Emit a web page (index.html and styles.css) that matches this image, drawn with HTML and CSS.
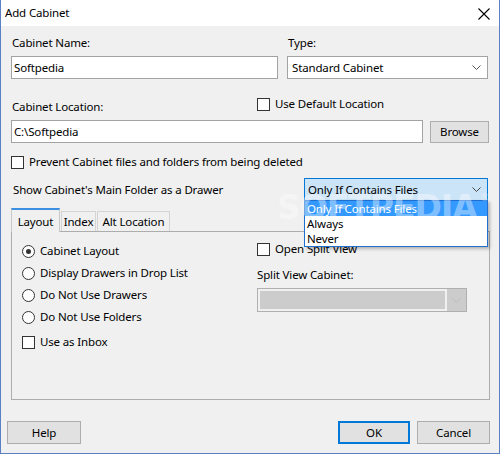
FILE: index.html
```html
<!DOCTYPE html>
<html>
<head>
<meta charset="utf-8">
<link rel="stylesheet" href="styles.css">
</head>
<body>
<div class="window">
  <div class="titlebar">
    <span class="title">Add Cabinet</span>
    <svg class="close" width="12" height="12" viewBox="0 0 12 12"><path d="M0.5 0.5 L11.5 11.5 M11.5 0.5 L0.5 11.5" stroke="#000" stroke-width="1.1" fill="none"/></svg>
  </div>
  <div class="content">
    <div class="row1">
      <div class="field">
        <div class="label">Cabinet Name:</div>
        <div class="textbox">Softpedia</div>
      </div>
      <div class="field">
        <div class="label">Type:</div>
        <div class="combo">
          <span class="ctext">Standard Cabinet</span>
          <svg class="chev" width="9" height="5" viewBox="0 0 9 5"><path d="M0.5 0.5 L4.5 4.5 L8.5 0.5" stroke="#555" fill="none"/></svg>
        </div>
      </div>
    </div>
    <div class="row2head">
      <div class="label">Cabinet Location:</div>
      <div class="check"><span class="box"></span><span>Use Default Location</span></div>
    </div>
    <div class="row2">
      <div class="textbox grow">C:\Softpedia</div>
      <div class="btn browse">Browse</div>
    </div>
    <div class="check prevent"><span class="box"></span><span>Prevent Cabinet files and folders from being deleted</span></div>
    <div class="drawer-row">
      <span class="drawer-label">Show Cabinet's Main Folder as a Drawer</span>
      <div class="combo-wrap">
        <div class="combo focus">
          <span class="ctext">Only If Contains Files</span>
          <svg class="chev" width="9" height="5" viewBox="0 0 9 5"><path d="M0.5 0.5 L4.5 4.5 L8.5 0.5" stroke="#444" fill="none"/></svg>
        </div>
        <div class="droplist">
          <div class="item sel">Only If Contains Files</div>
          <div class="item">Always</div>
          <div class="item">Never</div>
        </div>
      </div>
    </div>
    <div class="tabs">
      <div class="tab active">Layout</div>
      <div class="tab t-index">Index</div>
      <div class="tab t-alt">Alt Location</div>
    </div>
    <div class="panel">
      <div class="col-left">
        <div class="radio-row"><span class="radio on"></span><span>Cabinet Layout</span></div>
        <div class="radio-row"><span class="radio"></span><span>Display Drawers in Drop List</span></div>
        <div class="radio-row"><span class="radio"></span><span>Do Not Use Drawers</span></div>
        <div class="radio-row"><span class="radio"></span><span>Do Not Use Folders</span></div>
        <div class="check inbox"><span class="box"></span><span>Use as Inbox</span></div>
      </div>
      <div class="col-right">
        <div class="check split"><span class="box"></span><span>Open Split View</span></div>
        <div class="label split-label">Split View Cabinet:</div>
        <div class="dcombo">
          <span class="dis-fill"></span>
          <span class="dis-arrow"><svg width="9" height="5" viewBox="0 0 9 5"><path d="M0.5 0.5 L4.5 4.5 L8.5 0.5" stroke="#bdbdbd" fill="none"/></svg></span>
        </div>
      </div>
    </div>
  </div>
  <div class="buttons">
    <div class="btn help">Help</div>
    <div class="spacer"></div>
    <div class="btn ok">OK</div>
    <div class="btn cancel">Cancel</div>
  </div>
  <div class="watermark">SOFTPEDIA<sup>®</sup></div>
</div>
</body>
</html>
```

FILE: styles.css
```css
* { box-sizing: border-box; }
html, body { margin: 0; padding: 0; }
body {
  width: 500px;
  height: 454px;
  overflow: hidden;
  font-family: "Noto Sans", "Open Sans", sans-serif;
  font-size: 11.5px;
  letter-spacing: -0.15px;
  line-height: 16px;
  color: #000;
  background: #f0f0f0;
}
.window {
  position: relative;
  width: 500px;
  height: 454px;
  background: #f0f0f0;
  border-left: 1px solid #5b80c4;
  border-right: 1px solid #5b80c4;
  border-bottom: 1px solid #5b80c4;
  display: flex;
  flex-direction: column;
}
.titlebar {
  height: 26px;
  flex: 0 0 26px;
  background: #fff;
  display: flex;
  align-items: center;
  padding-left: 4px;
  padding-right: 9px;
}
.title { flex: 1; padding-bottom: 1px; }
.close { display: block; margin-top: 1px; }

.content {
  padding: 9px 10px 0 10px;
}
.label { height: 16px; white-space: nowrap; }
.row1 {
  display: grid;
  grid-template-columns: 267px 201px;
  column-gap: 9px;
}
.row1 .label { margin-bottom: 5px; padding-left: 1px; }
.textbox {
  height: 23px;
  background: #fff;
  border: 1px solid #a3a3a3;
  display: flex;
  align-items: center;
  padding-left: 2px;
  white-space: nowrap;
}
.combo {
  height: 23px;
  background: #fff;
  border: 1px solid #a3a3a3;
  display: flex;
  align-items: center;
  padding-left: 4px;
  padding-right: 6px;
  white-space: nowrap;
}
.ctext { flex: 1; }
.chev { display: block; }

.row2head {
  margin-top: 17px;
  height: 19px;
  display: grid;
  grid-template-columns: 246px 1fr;
}
.row2head .label { align-self: end; padding-left: 1px; }
.check {
  display: flex;
  align-items: center;
  gap: 5px;
  white-space: nowrap;
}
.box {
  width: 13px;
  height: 13px;
  flex: 0 0 13px;
  border: 1px solid #333;
  background: #fff;
}
.row2head .check { align-self: start; height: 16px; }
.row2 {
  margin-top: 5px;
  display: flex;
  gap: 7px;
}
.grow { flex: 1; }
.btn {
  height: 23px;
  background: #e1e1e1;
  border: 1px solid #adadad;
  display: flex;
  align-items: center;
  justify-content: center;
  white-space: nowrap;
}
.browse { width: 59px; margin-top: 1px; height: 22px; }

.prevent { margin-top: 11px; height: 16px; }

.drawer-row {
  margin-top: 8px;
  display: flex;
  align-items: center;
  height: 23px;
}
.drawer-label { padding-left: 2px; flex: 0 0 293px; }
.combo-wrap { position: relative; width: 184px; }
.combo.focus {
  background: #cce4f7;
  border-color: #0078d7;
  padding-left: 3px;
}
.droplist {
  position: absolute;
  left: 0;
  top: 22px;
  width: 184px;
  background: #fff;
  border: 1px solid #1f6fd0;
  box-shadow: 2px 2px 3px rgba(0, 0, 0, 0.25);
  z-index: 5;
}
.item {
  height: 15px;
  line-height: 15px;
  padding-left: 2px;
  white-space: nowrap;
}
.item.sel { background: #3399ff; color: #fff; }

.tabs {
  margin-top: 7px;
  height: 24px;
  display: flex;
  align-items: flex-start;
  position: relative;
  z-index: 1;
}
.tab {
  border: 1px solid #d4d4d4;
  border-bottom: none;
  display: flex;
  align-items: center;
  justify-content: center;
  background: #f0f0f0;
  white-space: nowrap;
  margin-top: 3px;
  height: 20px;
}
.tab.active {
  width: 49px;
  height: 24px;
  margin-top: 0;
  border-top: 2px solid #3c8ee0;
  border-left-color: #c8c8c8;
  border-right-color: #c8c8c8;
  padding-top: 1px;
}
.t-index { width: 35px; margin-left: 1px; }
.t-alt { width: 73px; margin-left: 1px; }
.panel {
  margin-top: -1px;
  width: 479px;
  height: 169px;
  border: 1px solid #adadad;
  display: grid;
  grid-template-columns: 235px 1fr;
  padding: 8px 0 0 10px;
}
.radio-row {
  height: 22px;
  display: flex;
  align-items: center;
  gap: 5px;
  white-space: nowrap;
}
.radio {
  width: 13px;
  height: 13px;
  flex: 0 0 13px;
  border: 1px solid #333;
  border-radius: 50%;
  background: #fff;
  position: relative;
}
.radio.on::after {
  content: "";
  position: absolute;
  left: 3px;
  top: 3px;
  width: 5px;
  height: 5px;
  border-radius: 50%;
  background: #333;
}
.inbox { margin-top: 3px; height: 22px; }
.split { height: 18px; }
.split-label { margin-top: 9px; }
.dcombo {
  margin-top: 5px;
  width: 210px;
  height: 24px;
  background: #f0f0f0;
  border: 1px solid #b0b0b0;
  padding: 2px 0 2px 2px;
  display: flex;
  align-items: stretch;
}
.dis-fill { flex: 1; background: #cccccc; }
.dis-arrow {
  flex: 0 0 19px;
  margin-left: 2px;
  background: #cccccc;
  margin-top: -2px;
  margin-bottom: -2px;
  display: flex;
  align-items: center;
  justify-content: center;
}
.dis-arrow svg { display: block; }

.buttons {
  margin-top: 21px;
  display: flex;
  padding: 0 9px 0 6px;
  height: 23px;
}
.spacer { flex: 1; }
.help { width: 74px; }
.ok { width: 72px; border: 2px solid #0078d7; }
.cancel { width: 73px; margin-left: 7px; }

.watermark {
  position: absolute;
  left: 276px;
  top: 180px;
  font-family: "DejaVu Sans", sans-serif;
  font-weight: bold;
  font-size: 33px;
  line-height: 36px;
  letter-spacing: -1px;
  color: rgba(255, 255, 255, 0.4);
  pointer-events: none;
  z-index: 10;
  white-space: nowrap;
}
.watermark sup { font-size: 10px; font-weight: normal; vertical-align: 18px; margin-left: 3px; }
```
